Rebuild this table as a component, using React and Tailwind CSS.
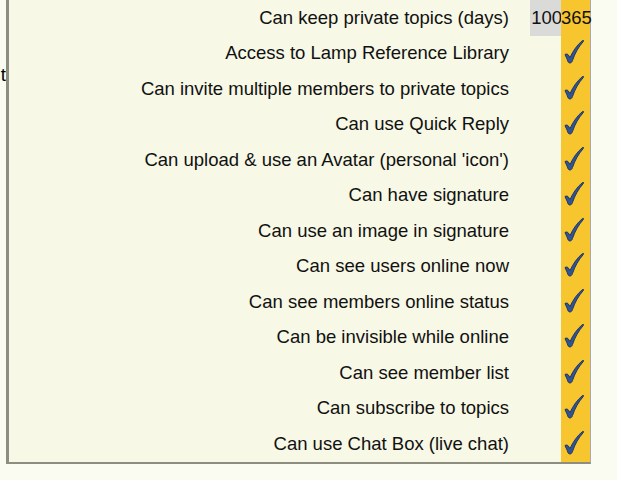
const rows = [
  'Can keep private topics (days)',
  'Access to Lamp Reference Library',
  'Can invite multiple members to private topics',
  'Can use Quick Reply',
  "Can upload & use an Avatar (personal 'icon')",
  'Can have signature',
  'Can use an image in signature',
  'Can see users online now',
  'Can see members online status',
  'Can be invisible while online',
  'Can see member list',
  'Can subscribe to topics',
  'Can use Chat Box (live chat)',
]

function Check() {
  return (
    <svg width="22" height="26" viewBox="0 0 22 26">
      <path
        d="M2 15.5 C3.5 14.5 5 15 6 17 L7 18.5 C10 12 14 6 19.5 1.5 C20.3 1 21 1.6 20.4 2.4 C15.5 8 12 14 9.5 21.5 C9 23.5 7.5 24.5 6 23.8 C4.8 23.2 4.5 21 3.6 19 C3 17.6 2.2 16.6 2 15.5 Z"
        fill="#2f5594"
        stroke="#1c2f5a"
        strokeWidth="0.9"
      />
    </svg>
  )
}

export default function App() {
  return (
    <div className="w-[617px] h-[480px] bg-[#fbfcf1] flex overflow-hidden" style={{ fontFamily: '"Liberation Sans", Arial, sans-serif' }}>
      <div className="w-[6px] shrink-0 overflow-hidden flex flex-col">
        <div className="h-[61px]" />
        <div className="text-[18.5px] leading-[28px] text-black flex justify-end">t</div>
      </div>
      <div className="w-[585px] h-[464px] shrink-0 bg-[#f7f8e6] border-l-[3px] border-l-[#8e8e80] border-r border-r-[#a9a9b3] border-b-2 border-b-[#8e8e80] flex flex-col">
        {rows.map((label, i) => (
          <div key={label} className="flex items-stretch h-[35.5px] text-[18.5px] text-[#111]">
            <div className="flex-1 flex items-center justify-end pr-[21px]">{label}</div>
            <div className={`w-[31px] flex items-center justify-end ${i === 0 ? 'bg-[#dadbd9]' : ''}`}>
              {i === 0 ? <span className="-mr-[1px]">100</span> : null}
            </div>
            <div className="w-[29px] bg-[#f7c52e] flex items-center justify-start">
              {i === 0 ? <span>365</span> : <span className="ml-[2px] mb-[2px]"><Check /></span>}
            </div>
          </div>
        ))}
      </div>
    </div>
  )
}
